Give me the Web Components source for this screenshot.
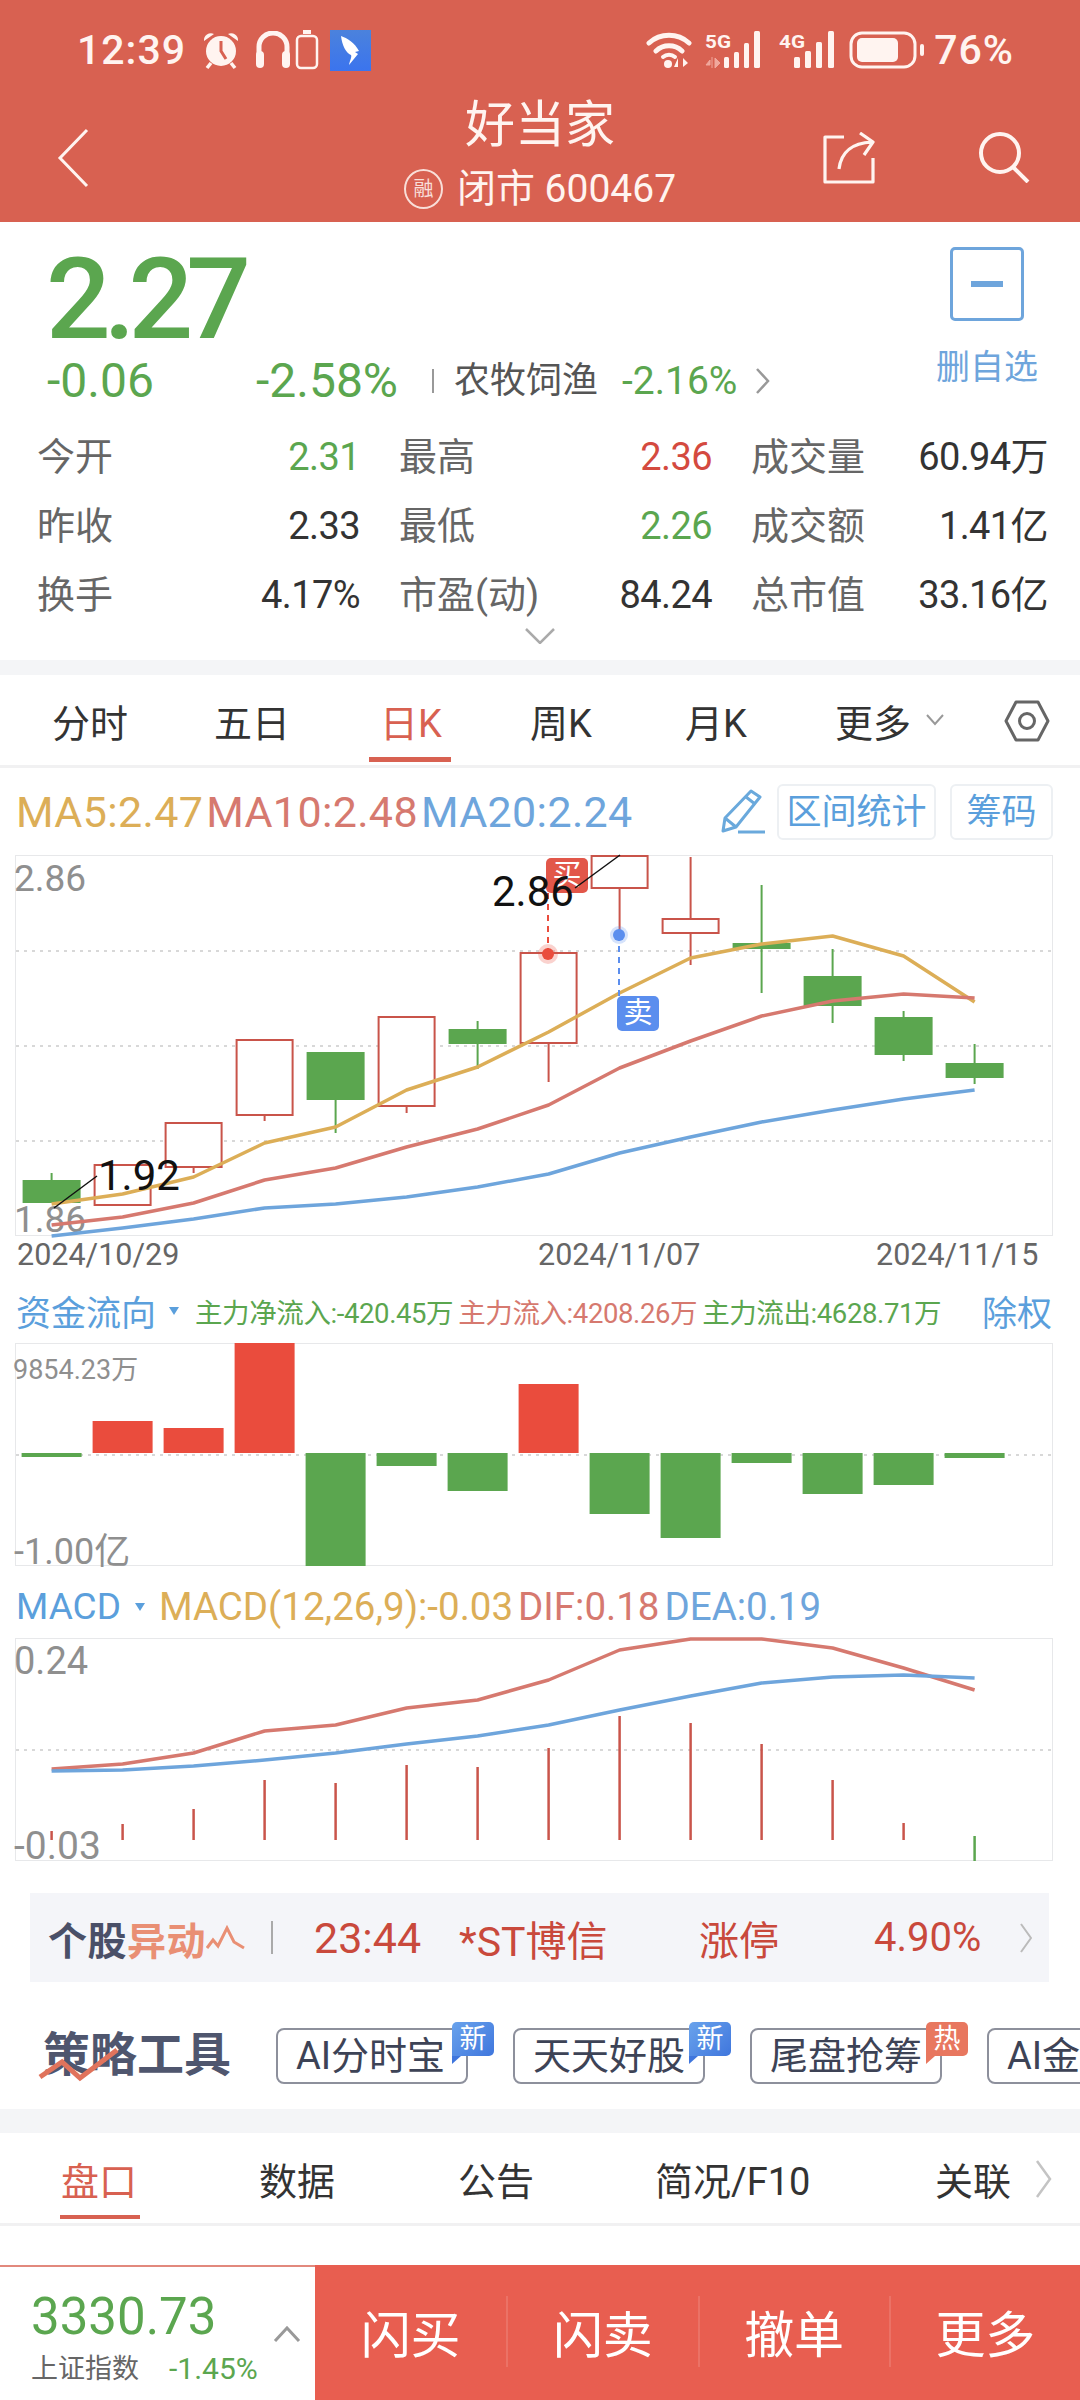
<!DOCTYPE html>
<html lang="zh">
<head>
<meta charset="utf-8">
<title>好当家</title>
<style>
  html,body{margin:0;padding:0;background:#fff}
  body{width:1080px;height:2400px;overflow:hidden;font-family:Roboto,"Noto Sans CJK SC",sans-serif;color:#333}
</style>
</head>
<body>
<stock-header></stock-header>
<quote-panel>
  <quote-cell data-label="今开" data-tone="down">2.31</quote-cell>
  <quote-cell data-label="最高" data-tone="up">2.36</quote-cell>
  <quote-cell data-label="成交量">60.94万</quote-cell>
  <quote-cell data-label="昨收">2.33</quote-cell>
  <quote-cell data-label="最低" data-tone="down">2.26</quote-cell>
  <quote-cell data-label="成交额">1.41亿</quote-cell>
  <quote-cell data-label="换手">4.17%</quote-cell>
  <quote-cell data-label="市盈(动)">84.24</quote-cell>
  <quote-cell data-label="总市值">33.16亿</quote-cell>
</quote-panel>
<period-tabs data-items="分时,五日,日K,周K,月K,更多" data-active="2"></period-tabs>
<kline-chart></kline-chart>
<flow-chart></flow-chart>
<macd-chart></macd-chart>
<ticker-strip></ticker-strip>
<tool-row>
  <tool-pill data-badge="新">AI分时宝</tool-pill>
  <tool-pill data-badge="新">天天好股</tool-pill>
  <tool-pill data-badge="热">尾盘抢筹</tool-pill>
  <tool-pill>AI金</tool-pill>
</tool-row>
<detail-tabs data-items="盘口,数据,公告,简况/F10,关联"></detail-tabs>
<trade-bar data-items="闪买,闪卖,撤单,更多"></trade-bar>

<script>
const YELLOW = '#dcae57', RED = '#d6796f', BLUE = '#6ea5dc', UP = '#ea4c3d', GREEN = '#5ba64f'
const CANDLE_RED = '#c9544a'

const cx = i => 51.6 + 71 * i
const line = (ys, color, w = 3.5) => `<polyline points="${ys.map((y, i) => `${cx(i)},${y}`).join(' ')}" fill="none" stroke="${color}" stroke-width="${w}" stroke-linejoin="round"/>`
const label = (x, cy, str, size, fill, anchor = 'start') => `<text x="${x}" y="${cy + size * 0.36}" font-size="${size}" fill="${fill}" text-anchor="${anchor}">${str}</text>`
const frame = (top, h) => `<rect x="15.5" y="${top + .5}" width="1037" height="${h - 1}" fill="none" stroke="#e7e8ea"/>`
const dotted = y => `<line x1="16" x2="1052" y1="${y}" y2="${y}" stroke="#d8d8d8" stroke-width="2" stroke-dasharray="3 5"/>`

class StockHeader extends HTMLElement {
  connectedCallback() {
    this.attachShadow({mode: 'open'}).innerHTML = `
      <style>
        :host{display:block;height:222px;background:#d86151;color:#fff4f0;position:relative}
        .status{display:flex;align-items:center;height:100px;padding:0 0 0 77px;box-sizing:border-box}
        .time,.pct{font-size:41px;font-weight:500;line-height:1;letter-spacing:1px}
        .status svg{display:block;flex:none}
        .grow{flex:1}
        .nav{display:grid;grid-template-columns:1fr auto 1fr;align-items:start;height:122px}
        .back{margin:28px 0 0 57px}
        .title{display:flex;flex-direction:column;align-items:center}
        .name{font-size:50px;line-height:50px}
        .sub{display:flex;align-items:center;font-size:39px;line-height:40px;margin-top:19px;gap:14px}
        .rong{width:35px;height:36px;border:2px solid #fff4f0;border-radius:50%;font-size:20px;line-height:36px;text-align:center;opacity:.85}
        .tools{display:flex;justify-content:flex-end;align-items:flex-start}
        .share{margin:32px 100px 0 0}
        .search{margin:31px 50px 0 0}
      </style>
      <div class="status">
        <span class="time">12:39</span>
        <svg style="margin-left:15px" width="40" height="40" viewBox="0 0 40 40">
          <path d="M3 11a7 7 0 0 1 10-7zM37 11a7 7 0 0 0-10-7z" fill="#fff4f0"/>
          <circle cx="20" cy="21" r="15" fill="#fff4f0"/>
          <path d="M20 11v10l5 8" fill="none" stroke="#d86151" stroke-width="3"/>
          <path d="M10 33l-4 5M30 33l4 5" stroke="#fff4f0" stroke-width="3.5"/>
        </svg>
        <svg style="margin-left:14px" width="36" height="38" viewBox="0 0 36 38">
          <path d="M4 24V16a14 14 0 0 1 28 0v8" fill="none" stroke="#fff4f0" stroke-width="5"/>
          <rect x="1" y="20" width="8" height="17" rx="4" fill="#fff4f0"/><rect x="27" y="20" width="8" height="17" rx="4" fill="#fff4f0"/>
        </svg>
        <svg style="margin-left:4px" width="24" height="40" viewBox="0 0 24 40">
          <rect x="8" y="0" width="8" height="4" fill="#fff4f0"/>
          <rect x="2" y="6" width="20" height="32" rx="4" fill="none" stroke="#fff4f0" stroke-width="2.5"/>
        </svg>
        <svg style="margin-left:11px" width="41" height="41" viewBox="0 0 41 41">
          <defs><linearGradient id="app" x1="0" y1="0" x2="0" y2="1"><stop offset="0" stop-color="#4b82dc"/><stop offset="1" stop-color="#3b74ee"/></linearGradient></defs>
          <rect width="41" height="41" fill="url(#app)"/>
          <path d="M11 6c6 2 14 7 18 15l-4 1 3 2-9 11c1-5 3-8 2-10-5-2-9-10-10-19z" fill="#fff"/>
        </svg>
        <span class="grow"></span>
        <svg width="48" height="38" viewBox="0 0 48 38">
          <path d="M3 12a30 30 0 0 1 40 0M10 20a19 19 0 0 1 26 0" fill="none" stroke="#fff4f0" stroke-width="5" stroke-linecap="round"/>
          <path d="M17 26a9 9 0 0 1 12 0" fill="none" stroke="#fff4f0" stroke-width="4" stroke-linecap="round"/>
          <circle cx="22" cy="33" r="4" fill="#fff4f0"/>
          <path d="M32 36v-9l-4 9zM37 27v9l5-4z" fill="#fff4f0"/>
        </svg>
        <svg style="margin-left:11px" width="62" height="38" viewBox="0 0 62 38">
          <text x="0" y="17" font-size="19" font-weight="700" fill="#fff4f0" textLength="26" lengthAdjust="spacingAndGlyphs">5G</text>
          <path d="M5 29l-4 5h4zM7 26v11M10 27v10l5-5z" fill="#f0a79c" stroke="#f0a79c" stroke-width="1"/>
          <g fill="#fff4f0"><rect x="19" y="26" width="5" height="11" rx="1.5"/><rect x="29" y="21" width="5" height="16" rx="1.5"/><rect x="39" y="12" width="5" height="25" rx="1.5"/><rect x="49" y="0" width="6" height="37" rx="1.5"/></g>
        </svg>
        <svg style="margin-left:12px" width="58" height="38" viewBox="0 0 58 38">
          <text x="0" y="17" font-size="19" font-weight="700" fill="#fff4f0" textLength="26" lengthAdjust="spacingAndGlyphs">4G</text>
          <g fill="#fff4f0"><rect x="15" y="26" width="6" height="11" rx="1.5"/><rect x="26" y="20" width="6" height="17" rx="1.5"/><rect x="37" y="11" width="6" height="26" rx="1.5"/><rect x="49" y="0" width="6" height="37" rx="1.5"/></g>
        </svg>
        <svg style="margin-left:12px" width="78" height="38" viewBox="0 0 78 38">
          <rect x="2" y="2" width="64" height="34" rx="11" fill="none" stroke="#fff4f0" stroke-width="3"/>
          <rect x="8" y="7" width="41" height="24" rx="5" fill="#fff4f0"/>
          <rect x="71" y="13" width="4" height="12" rx="2" fill="#fff4f0"/>
        </svg>
        <span class="pct" style="margin:0 66px 0 7px">76%</span>
      </div>
      <div class="nav">
        <svg class="back" width="32" height="60" viewBox="0 0 32 60"><path d="M30 2L3 30l27 28" fill="none" stroke="#fff4f0" stroke-width="3"/></svg>
        <div class="title">
          <span class="name">好当家</span>
          <span class="sub"><span class="rong">融</span><span>闭市 600467</span></span>
        </div>
        <div class="tools">
          <svg class="share" width="56" height="52" viewBox="0 0 56 52"><path d="M22 5H3v45h48V26M17 37c2-17 13-26 33-27M38 1l13 9-9 13" fill="none" stroke="#fff4f0" stroke-width="3.2" stroke-linejoin="round"/></svg>
          <svg class="search" width="52" height="52" viewBox="0 0 52 52"><circle cx="22" cy="22" r="19" fill="none" stroke="#fff4f0" stroke-width="4"/><path d="M35 36l15 15" stroke="#fff4f0" stroke-width="4"/></svg>
        </div>
      </div>
    `
  }
}

class QuoteCell extends HTMLElement {
  connectedCallback() {
    const tone = {up: '#d44a3f', down: '#5ba64f'}[this.dataset.tone] || '#333'
    this.attachShadow({mode: 'open'}).innerHTML = `
      <style>
        :host{display:flex;justify-content:space-between;align-items:center;line-height:69px}
        .k{color:#666;font-size:38px}
        .v{color:${tone};font-size:38px;letter-spacing:-.6px}
      </style>
      <span class="k">${this.dataset.label}</span>
      <span class="v"><slot></slot></span>
    `
  }
}

class QuotePanel extends HTMLElement {
  connectedCallback() {
    this.attachShadow({mode: 'open'}).innerHTML = `
      <style>
        :host{display:block;height:438px;background:#fff;border-bottom:15px solid #f4f5f7}
        .top{display:flex;height:201px}
        .left{flex:1;padding-left:46px}
        .price{font-size:114px;font-weight:500;line-height:118px;margin-top:18px;letter-spacing:-7px;color:${GREEN}}
        .chg{display:flex;align-items:center;height:46px;padding-left:1px;color:${GREEN};font-size:48px;line-height:46px}
        .a{width:209px}
        .b{width:176px}
        .bar{width:2px;height:24px;background:#999}
        .sector{color:#555;font-size:36px;margin-left:20px;width:168px}
        .c{font-size:39px;width:133px}
        .right{display:flex;flex-direction:column;align-items:center;box-sizing:border-box;width:186px}
        .btn{margin-top:25px;width:74px;height:74px;box-sizing:border-box;border:3px solid ${BLUE};border-radius:5px;display:flex;align-items:center;justify-content:center}
        .btn i{display:block;width:32px;height:6px;background:${BLUE}}
        .del{font-size:34px;line-height:40px;margin-top:26px;color:${BLUE}}
        .grid{display:grid;grid-template-columns:323px 313px 297px;column-gap:39px;padding-left:37px}
        .more{display:flex;justify-content:center;margin-top:-2px}
      </style>
      <div class="top">
        <div class="left">
          <div class="price">2.27</div>
          <div class="chg">
            <span class="a">-0.06</span><span class="b">-2.58%</span><i class="bar"></i>
            <span class="sector">农牧饲渔</span><span class="c">-2.16%</span>
            <svg width="16" height="28" viewBox="0 0 16 28"><path d="M2 2l11 12L2 26" fill="none" stroke="#999" stroke-width="2.5"/></svg>
          </div>
        </div>
        <div class="right">
          <div class="btn"><i></i></div>
          <div class="del">删自选</div>
        </div>
      </div>
      <div class="grid"><slot></slot></div>
      <div class="more"><svg width="32" height="16" viewBox="0 0 32 16"><path d="M2 1l14 14L30 1" fill="none" stroke="#aaa" stroke-width="2.5"/></svg></div>
    `
  }
}

class PeriodTabs extends HTMLElement {
  connectedCallback() {
    const items = this.dataset.items.split(',')
    const active = Number(this.dataset.active)
    this.attachShadow({mode: 'open'}).innerHTML = `
      <style>
        :host{display:block;height:93px;box-sizing:border-box;border-bottom:3px solid #f1f1f2;position:relative}
        .row{display:grid;grid-template-columns:162px 166px 150px 155px 150px auto;padding-left:52px;height:90px;align-items:center;font-size:38px;color:#333}
        .on{color:#d86151;position:relative;justify-self:start}
        .on::after{content:"";position:absolute;left:-11px;right:-9px;top:64px;height:5px;background:#d86151}
        .more{display:flex;align-items:center;gap:15px}
        .gear{position:absolute;left:1004px;top:24px}
      </style>
      <div class="row">
        ${items.map((t, i) => i == items.length - 1
          ? `<span class="more">${t}<svg width="18" height="12" viewBox="0 0 18 12"><path d="M1 1l8 9 8-9" fill="none" stroke="#999" stroke-width="2"/></svg></span>`
          : `<span class="${i == active ? 'on' : ''}">${t}</span>`).join('')}
      </div>
      <svg class="gear" width="46" height="44" viewBox="0 0 46 44">
        <path d="M12 3h22l10 19-10 19H12L2 22z" fill="none" stroke="#666" stroke-width="3" stroke-linejoin="round"/>
        <circle cx="23" cy="22" r="7.5" fill="none" stroke="#666" stroke-width="3"/>
      </svg>
    `
  }
}

class KlineChart extends HTMLElement {
  connectedCallback() {
    // [涨?, 上影, 实体上, 实体下, 下影]
    const candles = [
      [0,1173,1180,1203,1203],[1,1165,1165,1205,1205],[1,1123,1123,1167,1173],[1,1040,1040,1115,1121],
      [0,1052,1052,1100,1133],[1,1017,1017,1106,1113],[0,1021,1029,1044,1069],[1,953,953,1043,1082],
      [1,855,856,888,935],[1,857,919,933,965],[0,885,943,949,993],[0,949,976,1006,1023],
      [0,1011,1017,1055,1061],[0,1044,1063,1078,1084]
    ]
    const ma5 = [1204,1194,1177,1143,1127,1090,1067,1032,993,958,944,936,956,1002]
    const ma10 = [1225,1217,1203,1180,1168,1147,1129,1105,1068,1041,1016,1001,994,998]
    const ma20 = [1236,1228,1219,1208,1204,1197,1187,1174,1153,1137,1122,1110,1099,1090]
    const bars = candles.map(([up, hi, top, bot, lo], i) => {
      const x = cx(i), c = up ? CANDLE_RED : GREEN
      return `<line x1="${x}" x2="${x}" y1="${hi}" y2="${lo}" stroke="${c}" stroke-width="2"/>` + (up
        ? `<rect x="${x - 28}" y="${top}" width="56" height="${bot - top}" fill="#fff" stroke="${c}" stroke-width="2"/>`
        : `<rect x="${x - 29}" y="${top}" width="58" height="${bot - top}" fill="${c}"/>`)
    }).join('')
    this.attachShadow({mode: 'open'}).innerHTML = `
      <style>
        :host{display:block;height:510px}
        .head{display:flex;align-items:center;height:87px;padding-left:16px;font-size:43px;letter-spacing:.35px;box-sizing:border-box;white-space:nowrap}
        .head b{font-weight:400;margin-right:3px}
        .grow{flex:1}
        .tag{display:block;height:56px;line-height:54px;box-sizing:border-box;border:2px solid #edf0f3;border-radius:6px;font-size:35px;letter-spacing:0;color:#5b9fdc;text-align:center}
        svg{display:block;overflow:visible}
        .dates{display:grid;grid-template-columns:521px 338px auto;height:42px;line-height:38px;padding-left:17px;font-size:30.5px;color:#666}
        text{font-family:Roboto,"Noto Sans CJK SC",sans-serif}
      </style>
      <div class="head">
        <b style="color:${YELLOW}">MA5:2.47</b><b style="color:${RED}">MA10:2.48</b><b style="color:${BLUE}">MA20:2.24</b>
        <span class="grow"></span>
        <svg width="46" height="46" viewBox="0 0 46 46"><path d="M31 2l9 6-24 30-13 4 2-13zM5 29l11 9M26 8l9 7M18 43h27" fill="none" stroke="#6aa9dc" stroke-width="3" stroke-linejoin="round"/></svg>
        <span class="tag" style="width:159px;margin-left:11px">区间统计</span>
        <span class="tag" style="width:103px;margin:0 27px 0 14px">筹码</span>
      </div>
      <svg width="1080" height="381" viewBox="0 855 1080 381">
        ${frame(855, 381)}
        ${dotted(951)}${dotted(1046)}${dotted(1141)}
        ${label(14, 878, '2.86', 37, '#8f8f8f')}
        ${label(14, 1219, '1.86', 37, '#8f8f8f')}
        ${bars}
        ${line(ma5, YELLOW)}${line(ma10, RED)}${line(ma20, BLUE)}
        <line x1="548" x2="548" y1="893" y2="953" stroke="${UP}" stroke-width="2" stroke-dasharray="6 5"/>
        <circle cx="548" cy="954" r="10" fill="${UP}" opacity=".25"/><circle cx="548" cy="954" r="6" fill="${UP}"/>
        <line x1="619" x2="619" y1="935" y2="996" stroke="#5b8eee" stroke-width="2" stroke-dasharray="6 5"/>
        <circle cx="619" cy="935" r="9" fill="#5b8eee" opacity=".25"/><circle cx="619" cy="935" r="6" fill="#5b8eee"/>
        <rect x="546" y="858" width="42" height="35" rx="5" fill="#e2574a"/>${label(567, 875, '买', 29, '#fff', 'middle')}
        <rect x="617" y="996" width="42" height="35" rx="5" fill="#5b8eee"/>${label(638, 1013, '卖', 29, '#fff', 'middle')}
        ${label(98, 1175, '1.92', 42, '#111')}
        <line x1="54" x2="97" y1="1208" y2="1176" stroke="#111" stroke-width="1.5"/>
        ${label(492, 891, '2.86', 42, '#111')}
        <line x1="575" x2="620" y1="888" y2="855" stroke="#111" stroke-width="1.5"/>
      </svg>
      <div class="dates"><span>2024/10/29</span><span>2024/11/07</span><span>2024/11/15</span></div>
    `
  }
}

class FlowChart extends HTMLElement {
  connectedCallback() {
    const base = 1453
    const vals = [1457,1421,1428,1343,1566,1466,1491,1384,1514,1538,1463,1494,1485,1458]
    const bars = vals.map((y, i) => {
      const top = Math.min(y, base), h = Math.abs(y - base)
      return `<rect x="${cx(i) - 30}" y="${top}" width="60" height="${h}" fill="${y < base ? UP : GREEN}"/>`
    }).join('')
    this.attachShadow({mode: 'open'}).innerHTML = `
      <style>
        :host{display:block;height:288px;position:relative}
        .head{display:flex;align-items:center;height:65px;padding:0 28px 0 16px;white-space:nowrap}
        .title{font-size:35px;color:#5b9fdc}
        .arrow{margin:0 16px 0 13px}
        .v{font-size:27.5px;letter-spacing:-.4px;margin-right:5px}
        .grow{flex:1}
        svg.chart{display:block;overflow:visible}
        text{font-family:Roboto,"Noto Sans CJK SC",sans-serif}
      </style>
      <div class="head">
        <span class="title">资金流向</span>
        <svg class="arrow" width="10" height="8" viewBox="0 0 10 8"><path d="M0 0h10L5 8z" fill="#5b9fdc"/></svg>
        <span class="v" style="color:${GREEN}">主力净流入:-420.45万</span>
        <span class="v" style="color:${RED}">主力流入:4208.26万</span>
        <span class="v" style="color:${GREEN}">主力流出:4628.71万</span>
        <span class="grow"></span>
        <span class="title">除权</span>
      </div>
      <svg class="chart" width="1080" height="223" viewBox="0 1343 1080 223">
        ${frame(1343, 223)}
        ${dotted(1455)}
        ${bars}
        ${label(13, 1369, '9854.23万', 27, '#8f8f8f')}
        ${label(14, 1551, '-1.00亿', 36, '#8f8f8f')}
      </svg>
    `
  }
}

class MacdChart extends HTMLElement {
  connectedCallback() {
    const dif = [1769,1764,1753,1731,1725,1708,1700,1680,1650,1639,1639,1648,1668,1690]
    const dea = [1771,1770,1766,1760,1753,1744,1736,1725,1710,1696,1683,1677,1675,1678]
    const tops = [1831,1824,1809,1780,1783,1765,1767,1748,1716,1723,1744,1780,1823]
    const sticks = tops.map((y, i) => `<line x1="${cx(i)}" x2="${cx(i)}" y1="${y}" y2="1840" stroke="${CANDLE_RED}" stroke-width="2.5"/>`).join('')
    this.attachShadow({mode: 'open'}).innerHTML = `
      <style>
        :host{display:block;height:295px}
        .head{display:flex;align-items:center;height:72px;padding:9px 0 0 16px;box-sizing:border-box;white-space:nowrap;font-size:38.5px}
        .arrow{margin:0 14px 0 14px}
        b{font-weight:400;margin-right:5px}
        svg.chart{display:block;overflow:visible}
        text{font-family:Roboto,"Noto Sans CJK SC",sans-serif}
      </style>
      <div class="head">
        <span style="color:#5b9fdc;font-size:37px">MACD</span>
        <svg class="arrow" width="10" height="8" viewBox="0 0 10 8"><path d="M0 0h10L5 8z" fill="#5b9fdc"/></svg>
        <b style="color:${YELLOW}">MACD(12,26,9):-0.03</b><b style="color:${RED}">DIF:0.18</b><b style="color:${BLUE}">DEA:0.19</b>
      </div>
      <svg class="chart" width="1080" height="223" viewBox="0 1638 1080 223">
        ${frame(1638, 223)}
        ${dotted(1750)}
        ${sticks}
        <line x1="${cx(13)}" x2="${cx(13)}" y1="1836" y2="1861" stroke="${GREEN}" stroke-width="2.5"/>
        ${line(dif, RED)}${line(dea, BLUE)}
        ${label(14, 1660, '0.24', 38, '#8f8f8f')}
        ${label(14, 1845, '-0.03', 39, '#8f8f8f')}
      </svg>
    `
  }
}

class TickerStrip extends HTMLElement {
  connectedCallback() {
    this.attachShadow({mode: 'open'}).innerHTML = `
      <style>
        :host{display:block;padding:32px 31px 0 30px;height:121px;box-sizing:border-box}
        .band{display:flex;align-items:center;height:89px;background:#f4f5f9;font-size:40px;color:#c9493c;white-space:nowrap}
        .logo{display:flex;align-items:center;flex:none;font-size:39px;font-weight:700;margin-left:18px;letter-spacing:.5px;width:223px}
        .logo i{color:#4a5068;font-style:normal}
        .logo em{color:#e98f74;font-style:normal}
        .sep{width:2px;height:33px;background:#aaa;margin-right:41px}
        span{display:block}
      </style>
      <div class="band">
        <div class="logo"><i>个股</i><em>异动</em>
          <svg width="40" height="28" viewBox="0 0 40 28"><path d="M1 24l6-8 5 6 9-18 7 14 10 6" fill="none" stroke="#e98f74" stroke-width="3"/></svg>
        </div>
        <i class="sep"></i>
        <span style="width:145px;font-size:43px">23:44</span>
        <span style="width:240px;font-size:41px">*ST博信</span>
        <span style="width:175px">涨停</span>
        <span style="width:146px">4.90%</span>
        <svg width="12" height="30" viewBox="0 0 12 30"><path d="M1 1l10 14L1 29" fill="none" stroke="#bbb" stroke-width="2"/></svg>
      </div>
    `
  }
}

class ToolPill extends HTMLElement {
  connectedCallback() {
    const badge = this.dataset.badge
    const tone = badge == '热' ? 'hot' : 'new'
    this.attachShadow({mode: 'open'}).innerHTML = `
      <style>
        :host{display:block;flex:none;width:192px;height:56px;box-sizing:border-box;border:2px solid #8d909c;border-radius:8px;position:relative;background:#fff}
        .txt{display:block;padding-left:18px;font-size:38px;line-height:52px;color:#3d4356;white-space:nowrap}
        .badge{position:absolute;left:174px;top:-8px;width:42px;height:34px;line-height:34px;border-radius:5px 5px 5px 0;text-align:center;font-size:27px;color:#fff}
        .badge::after{content:"";position:absolute;left:0;top:34px;border-top:8px solid;border-right:9px solid transparent}
        .new{background:linear-gradient(135deg,#6aa3ec,#3f76dd)}
        .new::after{border-top-color:#3f76dd}
        .hot{background:#e8775f}
        .hot::after{border-top-color:#e8775f}
      </style>
      <span class="txt"><slot></slot></span>
      ${badge ? `<span class="badge ${tone}">${badge}</span>` : ''}
    `
  }
}

class ToolRow extends HTMLElement {
  connectedCallback() {
    this.attachShadow({mode: 'open'}).innerHTML = `
      <style>
        :host{display:block;height:151px;overflow:hidden;border-bottom:24px solid #f4f5f7;box-sizing:border-box}
        .row{display:flex;align-items:flex-start;position:relative}
        .logo{flex:none;width:276px;padding:45px 0 0 43px;height:103px;box-sizing:border-box;font-size:47px;line-height:56px;font-weight:700;color:#4f566e;position:relative;white-space:nowrap}
        .logo svg{position:absolute;left:38px;top:60px}
        .pills{display:flex;gap:45px;margin-top:46px}
      </style>
      <div class="row">
        <div class="logo">策略工具
          <svg width="92" height="44" viewBox="0 0 92 44"><path d="M2 35l22-15 18 16 37-28" fill="none" stroke="#e0735c" stroke-width="5"/></svg>
        </div>
        <div class="pills"><slot></slot></div>
      </div>
    `
  }
}

class DetailTabs extends HTMLElement {
  connectedCallback() {
    const items = this.dataset.items.split(',')
    this.attachShadow({mode: 'open'}).innerHTML = `
      <style>
        :host{display:block;height:93px;box-sizing:border-box;border-bottom:3px solid #f1f1f2;position:relative}
        .row{display:grid;grid-template-columns:198px 199px 197px 280px auto;padding-left:61px;height:90px;align-items:center;font-size:38px;color:#333}
        .on{color:#d86151;position:relative;justify-self:start}
        .on::after{content:"";position:absolute;left:-1px;right:-3px;top:64px;height:4px;background:#d86151}
        .next{position:absolute;left:1035px;top:27px}
      </style>
      <div class="row">${items.map((t, i) => `<span class="${i ? '' : 'on'}">${t}</span>`).join('')}</div>
      <svg class="next" width="17" height="38" viewBox="0 0 17 38"><path d="M2 1l13 18L2 37" fill="none" stroke="#c4c4c4" stroke-width="2.5"/></svg>
    `
  }
}

class TradeBar extends HTMLElement {
  connectedCallback() {
    const items = this.dataset.items.split(',')
    this.attachShadow({mode: 'open'}).innerHTML = `
      <style>
        :host{display:flex;position:fixed;left:0;right:0;top:2265px;height:135px}
        .index{width:315px;box-sizing:border-box;border-top:2px solid #e2897d;padding-left:31px;position:relative;background:#fff}
        .num{font-size:51px;line-height:56px;margin-top:22px;color:${GREEN}}
        .sub{display:flex;align-items:center;font-size:27px;line-height:34px;margin-top:7px;color:#666}
        .pct{font-size:30px;margin-left:30px;color:${GREEN}}
        .up{position:absolute;left:273px;top:59px}
        .acts{flex:1;display:grid;grid-template-columns:repeat(4,1fr);align-items:center;background:#e85e50;color:#fff;font-size:50px}
        .acts span{display:flex;align-items:center;justify-content:center;height:71px;margin-top:-3px;border-left:2px solid rgba(255,255,255,.13)}
        .acts span:first-child{border-left:0}
      </style>
      <div class="index">
        <div class="num">3330.73</div>
        <div class="sub"><span>上证指数</span><span class="pct">-1.45%</span></div>
        <svg class="up" width="28" height="16" viewBox="0 0 28 16"><path d="M2 15L14 2l12 13" fill="none" stroke="#999" stroke-width="3"/></svg>
      </div>
      <div class="acts">${items.map(t => `<span>${t}</span>`).join('')}</div>
    `
  }
}

customElements.define('stock-header', StockHeader)
customElements.define('quote-cell', QuoteCell)
customElements.define('quote-panel', QuotePanel)
customElements.define('period-tabs', PeriodTabs)
customElements.define('kline-chart', KlineChart)
customElements.define('flow-chart', FlowChart)
customElements.define('macd-chart', MacdChart)
customElements.define('ticker-strip', TickerStrip)
customElements.define('tool-pill', ToolPill)
customElements.define('tool-row', ToolRow)
customElements.define('detail-tabs', DetailTabs)
customElements.define('trade-bar', TradeBar)
</script>
</body>
</html>
